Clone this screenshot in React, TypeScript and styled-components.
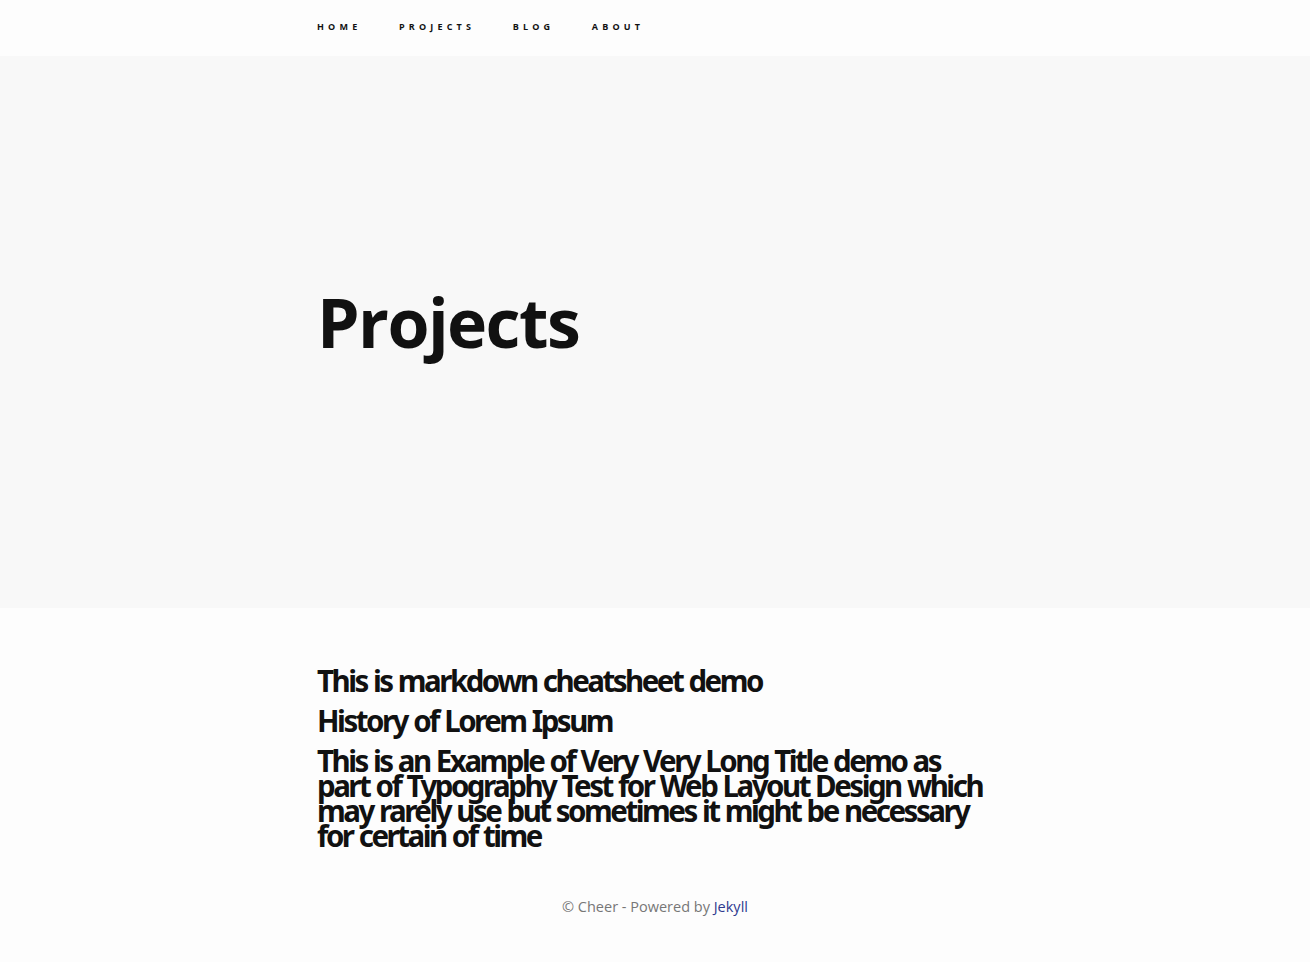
import React from "react";
import styled, { createGlobalStyle } from "styled-components";

const Global = createGlobalStyle`
  html, body { margin: 0; padding: 0; background: #fdfdfd; }
  body { font-family: "Open Sans", "Liberation Sans", sans-serif; color: #111; }
  * { box-sizing: border-box; }
`;

const Nav = styled.nav`
  height: 56px;
  background: #fdfdfd;
`;

const Container = styled.div`
  width: 676px;
  margin: 0 auto;
`;

const NavList = styled.ul`
  list-style: none;
  margin: 0;
  padding: 20px 0 0;
  display: flex;
  gap: 37.5px;
`;

const NavItem = styled.li`
  font-size: 9px;
  line-height: 14px;
`;

const NavLink = styled.a`
  font-weight: 700;
  letter-spacing: 4.2px;
  color: #111;
  text-decoration: none;
  text-transform: uppercase;
`;

const Hero = styled.header`
  background: #f8f8f8;
  height: 552px;
  display: flex;
  align-items: center;
  padding-bottom: 20px;
`;

const HeroTitle = styled.h1`
  margin: 0;
  font-size: 68px;
  font-weight: 700;
  letter-spacing: -1.6px;
  color: #111;
  line-height: 1;
`;

const Main = styled.main`
  padding-top: 60px;
`;

const PostList = styled.div`
  display: flex;
  flex-direction: column;
  gap: 15px;
`;

const PostTitle = styled.a`
  display: block;
  font-family: "Noto Sans", "Open Sans", sans-serif;
  font-size: 29.5px;
  font-weight: 700;
  letter-spacing: -2.5px;
  word-spacing: 1px;
  line-height: 25px;
  color: #111;
  text-decoration: none;
`;

const Footer = styled.footer`
  padding: 49px 0 37px;
  text-align: center;
  font-size: 14.5px;
  color: #777;
`;

const FooterLink = styled.a`
  color: #2f3a8f;
  text-decoration: none;
`;

const posts = [
  "This is markdown cheatsheet demo",
  "History of Lorem Ipsum",
  "This is an Example of Very Very Long Title demo as part of Typography Test for Web Layout Design which may rarely use but sometimes it might be necessary for certain of time",
];

export default function App() {
  return (
    <>
      <Global />
      <Nav>
        <Container>
          <NavList>
            {["Home", "Projects", "Blog", "About"].map((n) => (
              <NavItem key={n}>
                <NavLink href="#">{n}</NavLink>
              </NavItem>
            ))}
          </NavList>
        </Container>
      </Nav>
      <Hero>
        <Container>
          <HeroTitle>Projects</HeroTitle>
        </Container>
      </Hero>
      <Main>
        <Container>
          <PostList>
            {posts.map((p) => (
              <PostTitle key={p} href="#">{p}</PostTitle>
            ))}
          </PostList>
        </Container>
      </Main>
      <Footer>
        © Cheer - Powered by <FooterLink href="#">Jekyll</FooterLink>
      </Footer>
    </>
  );
}
